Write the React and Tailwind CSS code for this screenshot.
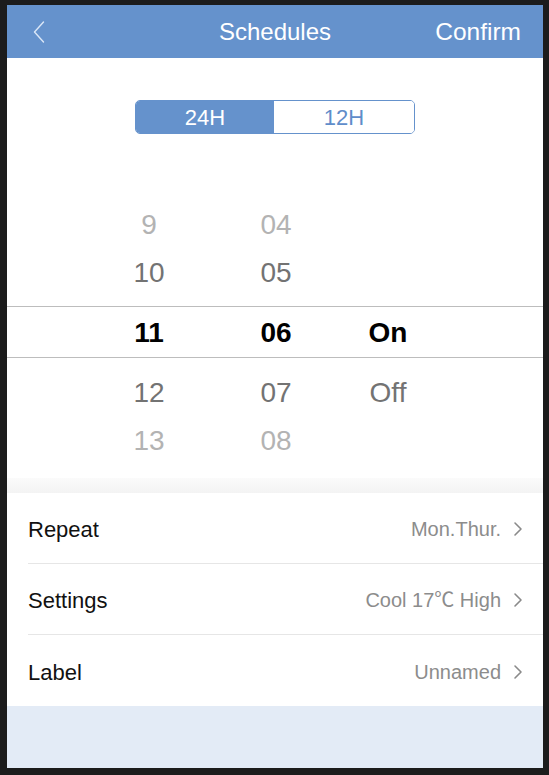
import React from "react";

const Chevron = () => (
  <svg width="10" height="16" viewBox="0 0 10 16" className="ml-[12px]">
    <polyline points="2,2 8,8 2,14" fill="none" stroke="#8a8a8a" strokeWidth="1.6" strokeLinecap="round" strokeLinejoin="round" />
  </svg>
);

function Row({ label, value, last }) {
  return (
    <div className="pl-[21px]">
      <div className={`flex items-center justify-between h-[71px] pr-[20px] ${last ? "" : "border-b border-[#e6e6e6]"}`}>
        <span className="text-[22px] text-[#111] pt-[3px]">{label}</span>
        <span className="flex items-center text-[20px] text-[#8c8c8c] pt-[2px]">
          {value}
          <Chevron />
        </span>
      </div>
    </div>
  );
}

export default function App() {
  const font = { fontFamily: '"Liberation Sans", Arial, "Noto Sans CJK SC", sans-serif' };
  return (
    <div className="w-[549px] h-[775px] bg-[#1c1c1c] pt-[5px] pl-[7px] pr-[6px] pb-[7px]" style={font}>
      <div className="w-full h-full bg-white flex flex-col overflow-hidden">
        {/* Header */}
        <div className="h-[53px] bg-[#6592cc] flex items-center relative shrink-0">
          <div className="w-[120px] pl-[26px] flex items-center">
            <svg width="12" height="22" viewBox="0 0 12 22">
              <polyline points="10.5,1 1.5,11 10.5,21" fill="none" stroke="#dbe7f7" strokeWidth="1.4" strokeLinecap="round" strokeLinejoin="round" />
            </svg>
          </div>
          <div className="flex-1 text-center text-white text-[24px] pt-[1px]">Schedules</div>
          <div className="w-[120px] text-right pr-[22px] text-white text-[24.5px] pt-[1px]">Confirm</div>
        </div>

        {/* Segment */}
        <div className="pt-[42px] flex pl-[128px]">
          <div className="flex w-[280px] h-[34px] rounded-[5px] border border-[#6592cc] overflow-hidden">
            <div className="w-[138px] bg-[#6592cc] text-white text-[22px] flex items-center justify-center">24H</div>
            <div className="flex-1 bg-white text-[#5f8dca] text-[22px] flex items-center justify-center">12H</div>
          </div>
        </div>

        {/* Picker */}
        <div className="mt-[66px] text-[28px]">
          <div className="flex pl-[92px] h-[48px] items-center text-[#b3b3b3] pt-[2px]">
            <div className="w-[100px] text-center">9</div>
            <div className="w-[100px] ml-[27px] text-center">04</div>
          </div>
          <div className="flex pl-[92px] h-[48px] items-center text-[#737373] pt-[2px]">
            <div className="w-[100px] text-center">10</div>
            <div className="w-[100px] ml-[27px] text-center">05</div>
          </div>
          <div className="mt-[10px] flex pl-[92px] h-[52px] items-center border-y border-[#bdbdbd] text-black font-bold pt-[1px]">
            <div className="w-[100px] text-center">11</div>
            <div className="w-[100px] ml-[27px] text-center">06</div>
            <div className="w-[100px] ml-[12px] text-center">On</div>
          </div>
          <div className="mt-[10px] flex pl-[92px] h-[48px] items-center text-[#737373] pt-[1px]">
            <div className="w-[100px] text-center">12</div>
            <div className="w-[100px] ml-[27px] text-center">07</div>
            <div className="w-[100px] ml-[12px] text-center">Off</div>
          </div>
          <div className="flex pl-[92px] h-[48px] items-center text-[#b3b3b3] pt-[2px]">
            <div className="w-[100px] text-center">13</div>
            <div className="w-[100px] ml-[27px] text-center">08</div>
          </div>
        </div>

        <div className="mt-[14px] h-[15px] bg-gradient-to-b from-[#fbfbfb] to-[#f3f3f3] shrink-0" />

        {/* List */}
        <div className="bg-white shrink-0">
          <Row label="Repeat" value="Mon.Thur." />
          <Row label="Settings" value="Cool 17℃ High" />
          <Row label="Label" value="Unnamed" last />
        </div>

        <div className="flex-1 bg-[#e3ebf6]" />
      </div>
    </div>
  );
}
